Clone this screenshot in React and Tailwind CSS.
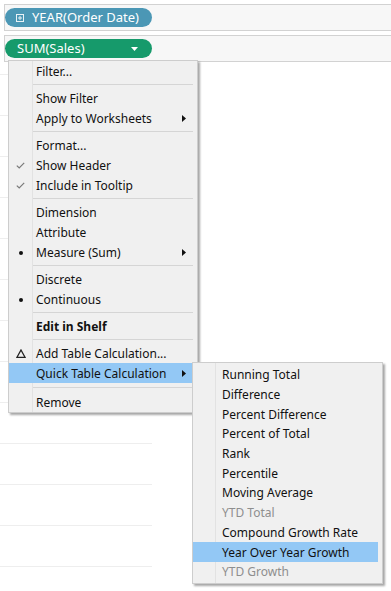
import React from 'react';

const FONT = { fontFamily: '"Noto Sans", "Open Sans", Arial, sans-serif' };

const mainItems = [
  { label: 'Filter...' },
  { sep: true },
  { label: 'Show Filter' },
  { label: 'Apply to Worksheets', sub: true },
  { sep: true },
  { label: 'Format...' },
  { label: 'Show Header', icon: 'check' },
  { label: 'Include in Tooltip', icon: 'check' },
  { sep: true },
  { label: 'Dimension' },
  { label: 'Attribute' },
  { label: 'Measure (Sum)', icon: 'dot', sub: true },
  { sep: true },
  { label: 'Discrete' },
  { label: 'Continuous', icon: 'dot' },
  { sep: true },
  { label: 'Edit in Shelf', bold: true },
  { sep: true },
  { label: 'Add Table Calculation...', icon: 'delta' },
  { label: 'Quick Table Calculation', sub: true, active: true },
  { sep: true, tall: true },
  { label: 'Remove' },
];

const subItems = [
  { label: 'Running Total' },
  { label: 'Difference' },
  { label: 'Percent Difference' },
  { label: 'Percent of Total' },
  { label: 'Rank' },
  { label: 'Percentile' },
  { label: 'Moving Average' },
  { label: 'YTD Total', disabled: true },
  { label: 'Compound Growth Rate' },
  { label: 'Year Over Year Growth', active: true },
  { label: 'YTD Growth', disabled: true },
];

const ItemIcon = ({ type }) => {
  if (type === 'check')
    return (
      <svg width="9" height="7" viewBox="0 0 9 7">
        <path d="M0.8 3.6 L3.2 6 L8.2 0.8" fill="none" stroke="#7a7a7a" strokeWidth="1.2" />
      </svg>
    );
  if (type === 'dot') return <div className="w-[4px] h-[4px] rounded-full bg-[#111]" />;
  if (type === 'delta')
    return (
      <svg width="10" height="9" viewBox="0 0 10 9">
        <path d="M5 1 L9 8.3 L1 8.3 Z" fill="none" stroke="#222" strokeWidth="1.3" strokeLinejoin="miter" />
      </svg>
    );
  return null;
};

const SubArrow = () => (
  <svg width="4" height="7" viewBox="0 0 4 7" className="absolute left-[173px] top-[7px]">
    <path d="M0 0 L4 3.5 L0 7 Z" fill="#111" />
  </svg>
);

const MainMenu = () => (
  <div className="absolute left-[8px] top-[60px] w-[190px] bg-[#f0f0f0] border border-[#cdcdcd] shadow-[2px_2px_2px_rgba(0,0,0,0.35)] text-[12px] leading-none text-[#111]">
    <div className="absolute left-[23px] top-0 bottom-0 w-[1px] bg-[#e2e2e2]" />
    {mainItems.map((it, i) =>
      it.sep ? (
        <div key={i} className={`${it.tall ? 'h-[9px]' : 'h-[7px]'} flex items-center pl-[24px] pr-[4px]`}>
          <div className="h-[1px] w-full bg-[#d5d5d5]" />
        </div>
      ) : (
        <div
          key={i}
          className={`relative h-[20px] mr-[5px] flex items-center pt-[1px] ${it.active ? 'bg-[#93c8f5]' : ''}`}
        >
          <div className="w-[23px] flex justify-center items-center">
            <ItemIcon type={it.icon} />
          </div>
          <span className={`pl-[4px] ${it.bold ? 'font-bold' : ''}`}>{it.label}</span>
          {it.sub && <SubArrow />}
        </div>
      )
    )}
  </div>
);

const SubMenu = () => (
  <div className="absolute left-[192px] top-[362px] w-[191px] bg-[#f0f0f0] border border-[#cdcdcd] shadow-[2px_2px_2px_rgba(0,0,0,0.35)] text-[12px] leading-none pt-[2px] pb-[1px]">
    <div className="absolute left-[22px] top-0 bottom-0 w-[1px] bg-[#e2e2e2]" />
    {subItems.map((it, i) => (
      <div
        key={i}
        className={`relative h-[19.7px] mr-[4px] flex items-center pt-[1px] pl-[29px] ${it.active ? 'bg-[#93c8f5]' : ''} ${
          it.disabled ? 'text-[#8e8e8e]' : 'text-[#111]'
        }`}
      >
        {it.label}
      </div>
    ))}
  </div>
);

export default function App() {
  return (
    <div className="relative w-[391px] h-[591px] bg-white overflow-hidden" style={FONT}>
      {/* shelves */}
      <div className="h-[4px]" />
      <div className="ml-[4px] h-[27px] border-y border-l border-[#d2d2d2] bg-[#f7f7f7] flex items-center">
        <div className="w-[147px] h-[19px] rounded-full bg-[#4b97b5] flex items-center pl-[11px] text-white text-[13px]">
          <svg width="8" height="8" viewBox="0 0 8 8" className="mr-[8px]">
            <rect x="0.5" y="0.5" width="7" height="7" fill="none" stroke="#e8f2f6" strokeWidth="1" />
            <path d="M4 2 V6 M2 4 H6" stroke="#e8f2f6" strokeWidth="1" />
          </svg>
          <span>YEAR(Order Date)</span>
        </div>
      </div>
      <div className="h-[4px]" />
      <div className="ml-[4px] h-[27px] border-y border-l border-[#d2d2d2] bg-[#f7f7f7] flex items-center">
        <div className="w-[147px] h-[19px] rounded-full bg-[#169a6b] flex items-center pl-[12px] pr-[14px] justify-between text-white text-[13px]">
          <span>SUM(Sales)</span>
          <svg width="7" height="4" viewBox="0 0 7 4">
            <path d="M0 0 H7 L3.5 4 Z" fill="#ffffff" />
          </svg>
        </div>
      </div>

      {/* view rows */}
      <div className="mt-[12px] w-[152px]">
        {Array.from({ length: 13 }).map((_, i) => (
          <div key={i} className="h-[41px] border-t border-[#eeeeee]" />
        ))}
      </div>

      <MainMenu />
      <SubMenu />
    </div>
  );
}
